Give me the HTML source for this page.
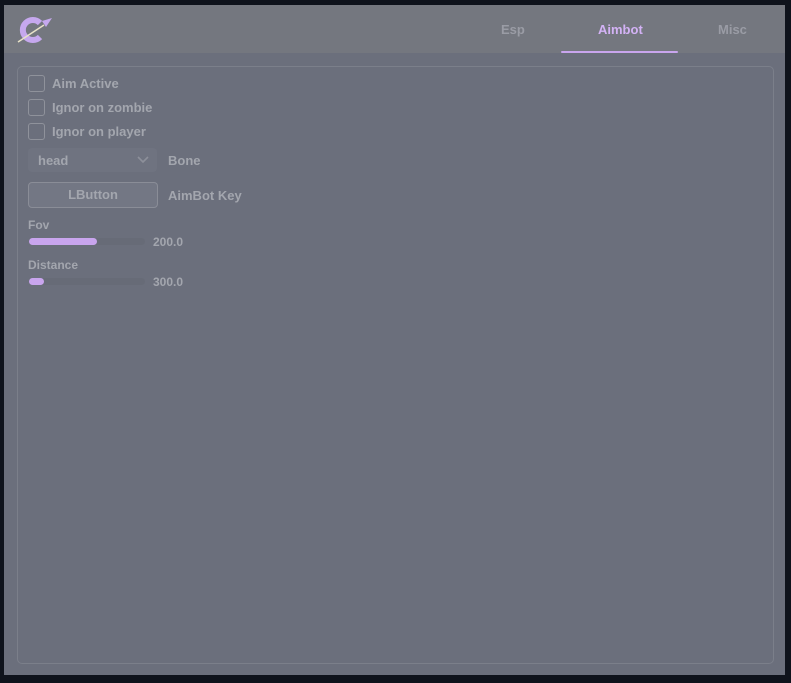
<!DOCTYPE html>
<html><head><meta charset="utf-8"><style>
*{margin:0;padding:0;box-sizing:border-box}
body{width:791px;height:683px;background:#0f131c;font-family:"Liberation Sans",sans-serif;font-weight:bold;position:relative;overflow:hidden}
.win{position:absolute;left:4px;top:5px;width:781px;height:670px;background:#6b6f7c}
.hdr{position:absolute;left:0;top:0;width:781px;height:48px;background:#74777f}
.tab{position:absolute;top:17px;font-size:13px;color:#9a9ca5}
.panel{position:absolute;left:13px;top:61px;width:757px;height:598px;border:1px solid #7b7f8a;border-radius:5px;background:#6b6f7c}
.t{position:absolute;font-size:13px;color:#a3a6ae}
.cb{position:absolute;left:24px;width:17px;height:17px;border:1px solid #8f929b;border-radius:3px}
.track{position:absolute;left:25px;width:116px;height:7px;background:#676b77;border-radius:4px}
.fill{height:7px;background:#c9a5ee;border-radius:4px}
</style></head><body>
<div class="win">
<div class="hdr">
<svg style="position:absolute;left:10px;top:10px" width="40" height="30" viewBox="0 0 40 30">
<path d="M26 8 A10 10 0 1 0 26 22" fill="none" stroke="#c6a8ee" stroke-width="6"/>
<path d="M28 6 L38 3 L32 12 Z" fill="#c6a8ee"/>
<path d="M4 27 L30 10" stroke="#e8e2c8" stroke-width="1.5"/>
</svg>
<div class="tab" style="left:497px">Esp</div>
<div class="tab" style="left:594px;color:#d3b2f5">Aimbot</div>
<div class="tab" style="left:714px">Misc</div>
<div style="position:absolute;left:557px;top:46px;width:117px;height:2px;background:#c9a5ee;border-radius:1px"></div>
</div>
<div class="panel"></div>
<div class="cb" style="top:70px"></div><div class="t" style="left:48px;top:71px">Aim Active</div>
<div class="cb" style="top:94px"></div><div class="t" style="left:48px;top:95px">Ignor on zombie</div>
<div class="cb" style="top:118px"></div><div class="t" style="left:48px;top:119px">Ignor on player</div>
<div style="position:absolute;left:24px;top:143px;width:129px;height:24px;background:#6f7380;border-radius:4px"></div>
<div class="t" style="left:34px;top:148px">head</div>
<svg style="position:absolute;left:133px;top:151px" width="12" height="8"><path d="M1 1 L6 6 L11 1" fill="none" stroke="#8d909a" stroke-width="1.6"/></svg>
<div class="t" style="left:164px;top:148px">Bone</div>
<div style="position:absolute;left:24px;top:177px;width:130px;height:26px;background:#737784;border:1px solid #8a8d97;border-radius:4px;text-align:center;font-size:13px;color:#a3a6ae;line-height:24px">LButton</div>
<div class="t" style="left:164px;top:183px">AimBot Key</div>
<div class="t" style="left:24px;top:213px;font-size:12px">Fov</div>
<div class="track" style="top:233px"><div class="fill" style="width:68px"></div></div>
<div class="t" style="left:149px;top:230px;font-size:12px">200.0</div>
<div class="t" style="left:24px;top:253px;font-size:12px">Distance</div>
<div class="track" style="top:273px"><div class="fill" style="width:15px"></div></div>
<div class="t" style="left:149px;top:270px;font-size:12px">300.0</div>
</div>
</body></html>
